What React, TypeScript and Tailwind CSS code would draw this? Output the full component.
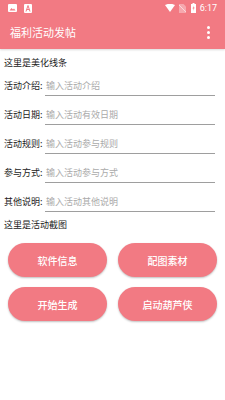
import React from "react"

const fields = [
  { label: "活动介绍:", hint: "输入活动介绍" },
  { label: "活动日期:", hint: "输入活动有效日期" },
  { label: "活动规则:", hint: "输入活动参与规则" },
  { label: "参与方式:", hint: "输入活动参与方式" },
  { label: "其他说明:", hint: "输入活动其他说明" },
]

const buttons = ["软件信息", "配图素材", "开始生成", "启动葫芦侠"]

function StatusBar() {
  return (
    <div className="h-[16px] flex items-center px-[8px] text-white">
      {/* image notification */}
      <svg width="9" height="8" viewBox="0 0 9 8" className="mr-[7px]">
        <rect x="0" y="0" width="9" height="8" rx="1" fill="white" />
        <path d="M1.5 6.5 L3.5 4 L5 5.5 L6 4.5 L7.5 6.5 Z" fill="#f27a83" />
      </svg>
      <svg width="8" height="9" viewBox="0 0 8 9">
        <rect x="0" y="0" width="8" height="9" rx="1" fill="white" />
        <path d="M2 7.5 L4 1.5 L6 7.5 M2.8 5.5 H5.2" stroke="#f27a83" strokeWidth="1" fill="none" />
      </svg>
      <div className="flex-1" />
      <svg width="10" height="8" viewBox="0 0 10 8" className="mr-[4px]">
        <path d="M0 1 Q5 -1.5 10 1 L5 8 Z" fill="white" />
      </svg>
      <svg width="7" height="9" viewBox="0 0 7 9" className="mr-[5px]">
        <path d="M0 0 H4.5 L7 2.5 V9 H0 Z" fill="white" opacity="0.35" />
        <path d="M0 1 L7 8" stroke="white" strokeWidth="0.8" opacity="0.7" />
      </svg>
      <svg width="5" height="10" viewBox="0 0 5 10" className="mr-[4px]">
        <rect x="1.5" y="0" width="2" height="1" fill="white" />
        <rect x="0" y="1" width="5" height="9" fill="white" />
        <path d="M2.8 2.5 L1.5 5.5 H2.6 L2.2 8 L3.6 4.6 H2.5 Z" fill="#f27a83" />
      </svg>
      <span className="text-[9px] leading-none" style={{ fontFamily: "Roboto, sans-serif" }}>6:17</span>
    </div>
  )
}

export default function App() {
  return (
    <div
      className="w-[225px] h-[400px] bg-white overflow-hidden"
      style={{ fontFamily: '"Noto Sans CJK SC", "Noto Sans", sans-serif' }}
    >
      {/* Header */}
      <div className="bg-[#f27a83] shadow-[0_1px_2px_rgba(0,0,0,0.15)]">
        <StatusBar />
        <div className="h-[33px] flex items-center pl-[10px] pr-[15px]">
          <span className="text-white text-[11px] flex-1">福利活动发帖</span>
          <div className="flex flex-col gap-[2px]">
            <span className="w-[3px] h-[3px] bg-white rounded-full" />
            <span className="w-[3px] h-[3px] bg-white rounded-full" />
            <span className="w-[3px] h-[3px] bg-white rounded-full" />
          </div>
        </div>
      </div>

      <div className="px-[4px] pt-[7px]">
        <p className="text-[9px] text-[#222] leading-[14px]">这里是美化线条</p>

        {/* Fields */}
        <div className="flex flex-col -mt-[3px]">
          {fields.map((f) => (
            <div key={f.label} className="flex items-end h-[29px] pr-[6px]">
              <span className="text-[9px] text-[#222] w-[41px] pb-[4px] leading-[12px]">{f.label}</span>
              <div className="flex-1 border-b border-[#9e9e9e] pb-[3px] leading-[12px]">
                <span className="text-[9px] text-[#aaaaaa] pl-[1px]">{f.hint}</span>
              </div>
            </div>
          ))}
        </div>

        <p className="text-[9px] text-[#222] leading-[14px] mt-[6px]">这里是活动截图</p>

        {/* Buttons */}
        <div className="grid grid-cols-2 gap-x-[11px] gap-y-[10px] px-[4px] mt-[11px]">
          {buttons.map((b) => (
            <button
              key={b}
              className="h-[34px] rounded-full bg-[#f27a83] text-white text-[10px] font-medium shadow-[0_1px_2px_rgba(0,0,0,0.25)]"
            >
              {b}
            </button>
          ))}
        </div>
      </div>
    </div>
  )
}
